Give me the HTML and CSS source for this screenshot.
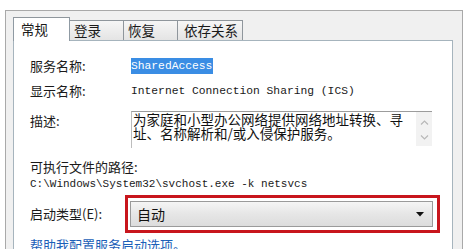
FILE: index.html
```html
<!DOCTYPE html>
<html lang="zh-CN">
<head>
<meta charset="utf-8">
<link rel="stylesheet" href="styles.css">
</head>
<body>
<div class="dialog">
  <div class="tabs">
    <div class="tab tab-active">常规</div>
    <div class="tab tab-2">登录</div>
    <div class="tab tab-3">恢复</div>
    <div class="tab tab-4">依存关系</div>
  </div>
  <div class="panel">
    <div class="row row-name">
      <span class="label">服务名称:</span>
      <span class="mono selected">SharedAccess</span>
    </div>
    <div class="row row-display">
      <span class="label">显示名称:</span>
      <span class="mono">Internet Connection Sharing (ICS)</span>
    </div>
    <div class="row row-desc">
      <span class="label label-top">描述:</span>
      <div class="textarea">
        <div class="ta-text">为家庭和小型办公网络提供网络地址转换、寻址、名称解析和/或入侵保护服务。</div>
        <div class="scrollbar">
          <svg class="sb-arrow" width="9" height="5" viewBox="0 0 9 5"><path d="M1 4.5 L4.5 1 L8 4.5" fill="none" stroke="#b8b8b8" stroke-width="1.2"/></svg>
          <svg class="sb-arrow" width="9" height="5" viewBox="0 0 9 5"><path d="M1 0.5 L4.5 4 L8 0.5" fill="none" stroke="#b8b8b8" stroke-width="1.2"/></svg>
        </div>
      </div>
    </div>
    <div class="row row-pathlabel">
      <span class="label">可执行文件的路径:</span>
    </div>
    <div class="row row-path">
      <span class="mono path">C:\Windows\System32\svchost.exe -k netsvcs</span>
    </div>
    <div class="row row-start">
      <span class="label label-start">启动类型(E):</span>
      <div class="highlight-box">
        <div class="combo">
          <span class="combo-text">自动</span>
          <svg class="combo-arrow" width="8" height="5" viewBox="0 0 8 5"><path d="M0 0 H8 L4 4.5 Z" fill="#111"/></svg>
        </div>
      </div>
    </div>
    <div class="row row-link">
      <span class="link">帮助我配置服务启动选项。</span>
    </div>
  </div>
</div>
</body>
</html>
```
FILE: styles.css
```css
html, body {
  margin: 0;
  padding: 0;
  background: #ffffff;
  width: 473px;
  height: 249px;
  overflow: hidden;
}
body {
  font-family: "Noto Sans CJK SC", "Noto Sans", sans-serif;
  font-size: 13px;
  color: #1a1a1a;
}
.dialog {
  margin: 10px 0 0 5px;
  width: 458px;
  height: 260px;
  border: 1px solid #a9a9a9;
  border-bottom: none;
  background: #f0f0f0;
  padding: 6px 9px 0 7px;
  box-sizing: border-box;
}
.tabs {
  display: flex;
  align-items: flex-start;
  height: 23px;
  position: relative;
  z-index: 2;
}
.tab {
  box-sizing: border-box;
  height: 20px;
  margin-top: 3px;
  border: 1px solid #8f969c;
  border-bottom: none;
  border-left: none;
  background: linear-gradient(#f6f6f6, #e4e4e4);
  font-size: 13.5px;
  line-height: 19px;
  padding-left: 4px;
  white-space: nowrap;
}
.tab-active {
  width: 57px;
  height: 24px;
  margin-top: 0;
  background: #ffffff;
  border-left: 1px solid #8f9aa3;
  border-right: 1px solid #8f9aa3;
  padding-left: 7px;
  line-height: 23px;
}
.tab-2 { width: 54px; }
.tab-3 { width: 54px; }
.tab-4 { width: 65px; padding-left: 6px; }
.panel {
  background: #ffffff;
  border: 1px solid #a6b4bd;
  height: 230px;
  padding: 17px 0 0 16px;
  box-sizing: border-box;
}
.row {
  display: flex;
  align-items: center;
}
.label {
  width: 101px;
  flex: none;
  line-height: 16px;
  white-space: nowrap;
}
.mono {
  font-family: "Liberation Mono", "DejaVu Sans Mono", monospace;
  font-size: 11.3px;
  line-height: 16px;
  color: #1a1a1a;
  white-space: nowrap;
}
.selected {
  background: #3a8de4;
  color: #ffffff;
  padding: 0 1px 0 0;
}
.row-name { height: 16px; }
.row-display { height: 16px; margin-top: 9px; }
.row-desc {
  margin-top: 12px;
  height: 37px;
  align-items: flex-start;
}
.label-top { padding-top: 2px; }
.textarea {
  width: 301px;
  height: 37px;
  border-top: 1px solid #9c9c9c;
  border-left: 1px solid #bdbdbd;
  box-sizing: border-box;
  display: flex;
  margin-left: 0;
}
.ta-text {
  width: 284px;
  font-size: 13.5px;
  line-height: 14px;
  padding: 0 0 0 1px;
  color: #111;
  word-break: break-all;
}
.scrollbar {
  width: 16px;
  background: #f2f2f2;
  display: flex;
  flex-direction: column;
  align-items: center;
  justify-content: space-between;
  padding: 8px 0 6px;
  box-sizing: border-box;
  height: 34px;
}
.sb-arrow { display: block; }
.row-pathlabel { margin-top: 11px; height: 16px; }
.row-path { height: 16px; margin-top: 1px; }
.path { font-size: 11px; }
.row-start { margin-top: 3px; height: 38px; }
.label-start { width: 95px; }
.highlight-box {
  border: 3px solid #c8161d;
  width: 315px;
  height: 38px;
  box-sizing: border-box;
  padding: 3px 4px 3px 2px;
}
.combo {
  height: 26px;
  box-sizing: border-box;
  border: 1px solid #9a9a9a;
  background: linear-gradient(#f5f5f5, #e6e6e6 50%, #dcdcdc);
  display: flex;
  align-items: center;
  justify-content: space-between;
  padding: 0 8px 0 6px;
}
.combo-text {
  font-size: 14px;
  color: #111;
}
.combo-arrow { display: block; }
.row-link { margin-top: 4px; height: 16px; }
.link {
  color: #1c5fb8;
  line-height: 16px;
  font-size: 13px;
  white-space: nowrap;
}
```
